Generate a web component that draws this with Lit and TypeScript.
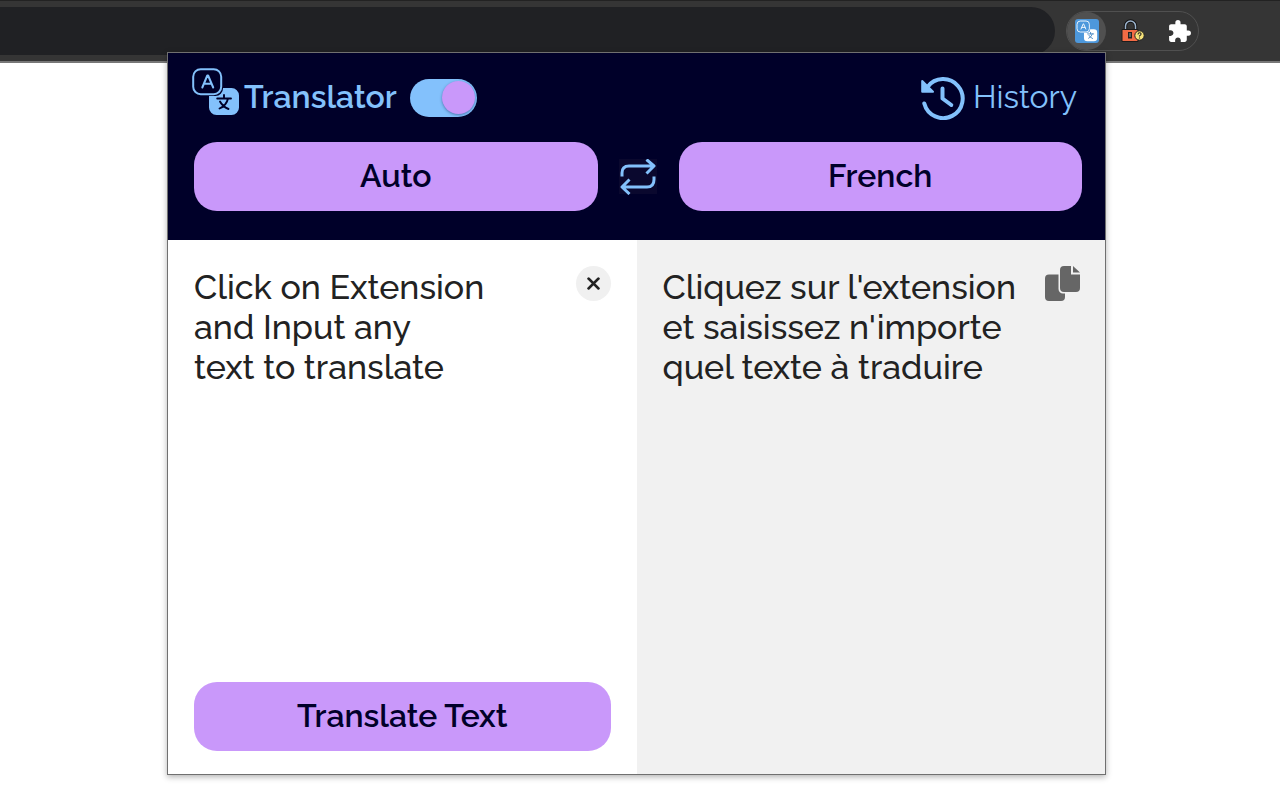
import { LitElement, html, css, svg } from "lit";
import { customElement, state } from "lit/decorators.js";

const translateGlyph = (line: string, ink: string) => svg`
  <rect x="1.2" y="1.2" width="28" height="25" rx="7.5" fill="none" stroke=${line} stroke-width="2"/>
  <path d="M10.300 19.500L15.300 7.500h.8L21.200 19.500M12 15.700h7.400" fill="none" stroke=${line} stroke-width="2" stroke-linecap="round" stroke-linejoin="round"/>
  <path d="M31 20h8.500a7.500 7.500 0 0 1 7.500 7.500v12a7.500 7.500 0 0 1-7.500 7.500h-15a7.500 7.500 0 0 1-7.500-7.500V28h6.500a7.500 7.500 0 0 0 7.500-7.500z" fill=${line}/>
  <path d="M25.200 30.500h13.800M32 27v3.500M27.500 40.500q7-3 8.500-10M28 33.500q2.500 5 8.500 7.500" fill="none" stroke=${ink} stroke-width="1.900" stroke-linecap="round"/>`;

@customElement("app-root")
export class AppRoot extends LitElement {
  @state() private source = "Click on Extension\nand Input any\ntext to translate";
  @state() private result = "Cliquez sur l'extension\net saisissez n'importe\nquel texte à traduire";

  static styles = css`
    :host {
      display: flex;
      flex-direction: column;
      min-height: 100vh;
      background: #fff;
      font-family: Raleway, Lato, "Open Sans", sans-serif;
      color: #222;
    }
    * { box-sizing: border-box; }
    button, textarea { font: inherit; color: inherit; border: 0; margin: 0; padding: 0; background: none; }
    button { cursor: pointer; }
    svg { display: block; flex: none; }
    .toolbar {
      display: flex;
      align-items: center;
      gap: 11px;
      height: 63px;
      padding-right: 81px;
      background: #353535;
      border-top: 1px solid #222;
      border-bottom: 2px solid #777;
    }
    .address { flex: 1; height: 48px; background: #202124; border-radius: 0 24px 24px 0; }
    .extensions {
      display: flex;
      align-items: center;
      justify-content: space-between;
      width: 133px;
      height: 40px;
      padding-right: 6px;
      border: 1px solid #505050;
      border-radius: 20px;
    }
    .extensions button { height: 38px; display: grid; place-items: center; }
    .extensions .current { width: 39px; background: #505050; border-radius: 20px; }
    .extensions .lock { padding-right: 8px; }
    .popup {
      flex: 1;
      display: flex;
      flex-direction: column;
      margin: -11px 174px 25px 167px;
      border: 1px solid #707070;
      box-shadow: 0 2px 6px rgba(0, 0, 0, 0.3);
      z-index: 1;
    }
    .header { background: #000029; padding: 0 23px 29px 26px; }
    .title-row { display: flex; align-items: center; height: 89px; color: #83c1fc; }
    .logo { margin: -12px 4px 0 -2px; }
    h1 { margin: 0 13px 0 0; font-size: 32px; line-height: 40px; font-weight: 600; padding-bottom: 1px; }
    .switch { display: block; }
    .switch input {
      appearance: none;
      display: flex;
      align-items: center;
      justify-content: flex-start;
      width: 67px;
      height: 38px;
      margin: 0;
      padding: 0 2px;
      border-radius: 19px;
      background: #83c1fc;
    }
    .switch input:checked { justify-content: flex-end; }
    .switch input::before {
      content: "";
      width: 33px;
      height: 33px;
      border-radius: 50%;
      background: #c998fa;
      box-shadow: 0 1px 3px rgba(0, 0, 60, 0.4);
    }
    .history {
      display: flex;
      align-items: center;
      gap: 8px;
      margin-left: auto;
      margin-right: 5px;
      padding-bottom: 1px;
      color: inherit;
      text-decoration: none;
      font-size: 32px;
      line-height: 40px;
    }
    .languages { display: grid; grid-template-columns: 1fr 81px 1fr; align-items: center; }
    .pill {
      height: 69px;
      padding-bottom: 1px;
      border-radius: 23px;
      background: #c998fa;
      color: #000029;
      font-size: 32px;
      line-height: 40px;
      font-weight: 600;
    }
    .swap { display: grid; place-items: center; }
    .panels { flex: 1; display: grid; grid-template-columns: 1fr 1fr; }
    .panel { display: flex; flex-direction: column; min-width: 0; padding: 26px 26px 23px; }
    .output { background: #f1f1f1; padding-right: 24px; }
    .text-row { flex: 1; display: flex; align-items: flex-start; }
    .text {
      flex: 1;
      min-width: 0;
      align-self: stretch;
      margin: 0;
      padding-top: 1px;
      font-size: 34px;
      line-height: 40px;
      font-weight: 500;
      white-space: pre;
      resize: none;
      overflow: hidden;
      outline: 0;
    }
    .clear {
      display: grid;
      place-items: center;
      width: 35px;
      height: 35px;
      border-radius: 50%;
      background: #f0f0f0;
    }
  `;

  private clear() {
    this.source = "";
    this.result = "";
  }

  render() {
    return html`
      <nav class="toolbar" aria-label="Browser">
        <div class="address"></div>
        <div class="extensions">
          <button class="current" aria-label="Translator">
            <svg width="24" height="24" viewBox="0 0 24 24">
              <rect width="24" height="24" rx="3" fill="#4d98dc"/>
              <g transform="translate(1.500 1.500) scale(.44)">${translateGlyph("#fff", "#397fbd")}</g>
            </svg>
          </button>
          <button class="lock" aria-label="Site lock">
            <svg width="24" height="24" viewBox="0 0 24 24">
              <path d="M4.500 11V7a5 5 0 0 1 10 0V11" fill="none" stroke="#111" stroke-width="3.400"/>
              <path d="M4.500 11V7a5 5 0 0 1 10 0V11" fill="none" stroke="#9cb4ce" stroke-width="1.500"/>
              <path d="M1 10.500h16v12H1z" fill="#f26b45" stroke="#1c1c1c"/>
              <path d="M7 13h4v6.500H7z" fill="#222"/><path d="M9 14v4" stroke="#999"/>
              <circle cx="18.500" cy="16.500" r="4.700" fill="#f7e47a" stroke="#222"/>
              <path d="M17 15.500q0-1.800 1.600-1.800T20 15.200q0 .8-1.500 1.700v.6M18.500 18.500v1" fill="none" stroke="#222" stroke-width="1.100"/>
            </svg>
          </button>
          <button aria-label="Extensions">
            <svg width="25" height="25" viewBox="0 0 24 24" fill="#fff">
              <path d="M20.500 11H19V7c0-1.100-.9-2-2-2h-4V3.500a2.500 2.500 0 0 0-5 0V5H4c-1.100 0-1.990.9-1.990 2v3.800H3.500c1.490 0 2.700 1.210 2.700 2.700s-1.210 2.700-2.700 2.700H2V20c0 1.100.9 2 2 2h3.800v-1.500c0-1.490 1.210-2.700 2.700-2.700s2.700 1.210 2.700 2.700V22H17c1.100 0 2-.9 2-2v-4h1.500a2.500 2.500 0 0 0 0-5z"/>
            </svg>
          </button>
        </div>
      </nav>

      <main class="popup">
        <header class="header">
          <div class="title-row">
            <svg class="logo" width="48" height="48" viewBox="0 0 48 48">${translateGlyph("#83c1fc", "#000029")}</svg>
            <h1>Translator</h1>
            <label class="switch"><input type="checkbox" role="switch" aria-label="Enable translator" checked /></label>
            <a class="history" href="#history">
              <svg width="45" height="45" viewBox="0 0 45 45" fill="none" stroke="#83c1fc" stroke-width="4" stroke-linecap="round" stroke-linejoin="round">
                <path d="M7.500 12A19.500 19.500 0 1 1 4.300 28.500"/>
                <path d="M2.200 6L13 16.800H2.200z" fill="#83c1fc" stroke-width="2"/>
                <path d="M22.500 13.500v10l8.800 6.500"/>
              </svg>
              History
            </a>
          </div>
          <div class="languages">
            <button class="pill">Auto</button>
            <button class="swap" aria-label="Swap languages">
              <svg width="38" height="36" viewBox="0 0 38 36" fill="none" stroke="#83c1fc" stroke-width="3" stroke-linejoin="round">
                <rect width="38" height="35" fill="#0a082e" stroke="none"/>
                <path d="M3 17.500v-3.500Q3 7 10 7h25M27.500 .5l7.500 6.500-7.500 7.500M35 17.500V20.500q0 7.500-7 7.500H3M10.500 20.500L3 28l7.500 7"/>
              </svg>
            </button>
            <button class="pill">French</button>
          </div>
        </header>
        <div class="panels">
          <section class="panel">
            <div class="text-row">
              <textarea class="text" aria-label="Text to translate" spellcheck="false"
                .value=${this.source}
                @input=${(e: Event) => (this.source = (e.target as HTMLTextAreaElement).value)}></textarea>
              <button class="clear" aria-label="Clear text" @click=${this.clear}>
                <svg width="13" height="13" viewBox="0 0 12 12"><path d="M1.500 1.500l9 9M10.500 1.500l-9 9" stroke="#222" stroke-width="2.600" stroke-linecap="round"/></svg>
              </button>
            </div>
            <button class="pill">Translate Text</button>
          </section>
          <section class="panel output">
            <div class="text-row">
              <p class="text" lang="fr">${this.result}</p>
              <button aria-label="Copy translation" @click=${() => navigator.clipboard?.writeText(this.result)}>
                <svg width="36" height="36" viewBox="0 0 36 36" fill="#666">
                  <path d="M4 8.500h9.500V23a4.500 4.500 0 0 0 4.500 4.500h2V31a4 4 0 0 1-4 4H4a4 4 0 0 1-4-4V12.500a4 4 0 0 1 4-4z"/>
                  <path d="M19 0h7v8.500h9V22a4 4 0 0 1-4 4H19a4 4 0 0 1-4-4V4a4 4 0 0 1 4-4z"/>
                  <path d="M28 0l7 6.500h-7z"/>
                </svg>
              </button>
            </div>
          </section>
        </div>
      </main>
    `;
  }
}
